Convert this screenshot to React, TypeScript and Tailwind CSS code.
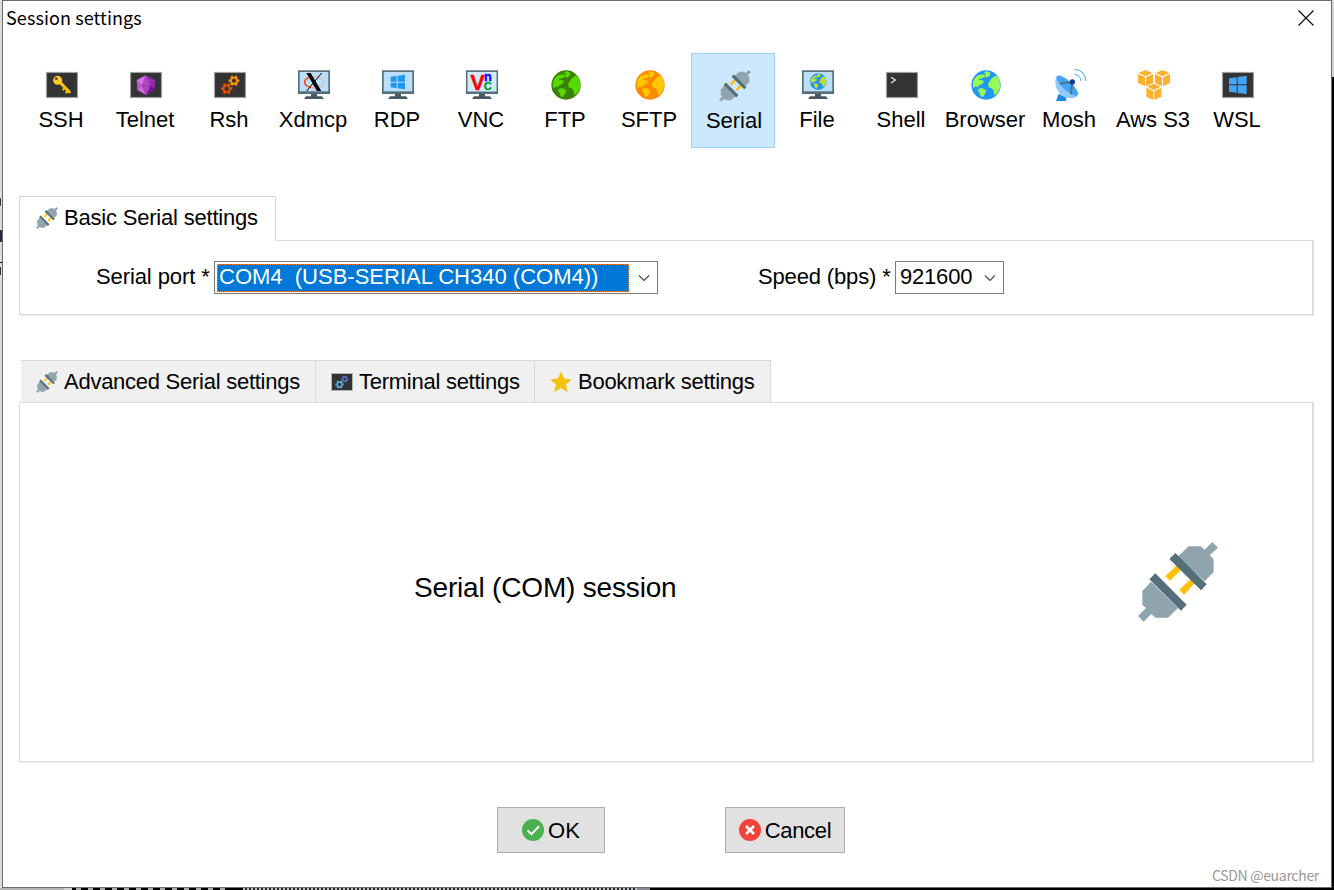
import type { ReactNode } from 'react';

function Plug({ className }: { className: string }) {
    return (
        <svg viewBox="84 66 240 240" className={className}>
            <path d="M203 110 L236 79 H272 L284 89 L307 66 L324 83 L299 106 L311 118 V156 L284 184 Z" fill="#90a4ae" />
            <path d="M123 185 L97 213 V255 L108 264 L84 288 L101 305 L124 282 L136 293 H174 L204 264 Z" fill="#90a4ae" />
            <path d="M200 136 L213 149 L180 182 L166 169 Z M241 178 L254 190 L222 224 L208 210 Z" fill="#ffc107" />
            <path d="M196 99 L290 193 L273 211 L178 117 Z M136 160 L230 254 L213 272 L118 178 Z" fill="#546e7a" />
        </svg>
    );
}

function Icon({ children }: { children: ReactNode }) {
    return (
        <svg viewBox="0 0 96 96" className="w-8 h-8 shrink-0 overflow-visible">
            {children}
        </svg>
    );
}

function Screen({ children }: { children?: ReactNode }) {
    return (
        <Icon>
            <rect x="1.5" y="10.5" width="93" height="75" fill="#333" stroke="#9e9e9e" strokeWidth="3.5" />
            {children}
        </Icon>
    );
}

function Monitor({ children }: { children?: ReactNode }) {
    return (
        <Icon>
            <path d="M39 72 H57 V82 H72 L78 90 H18 L24 82 H39 Z" fill="#455a64" />
            <rect x="0" y="4" width="96" height="71" fill="#546e7a" />
            <rect x="5" y="9" width="86" height="58" fill="#bbdefb" />
            {children}
        </Icon>
    );
}

function Globe({ sea, land }: { sea: string; land: string }) {
    return (
        <>
            <circle cx="48" cy="48" r="44" fill={sea} />
            <g fill={land}>
                <path d="M11 34 Q17 21 28 17 L41 16 L46 21 L44 25 L37 26 L35 30 L28 28 L27 34 L36 33 L42 38 L38 44 L30 47 L24 53 L16 53 L9 58 Q7 44 11 34 Z" />
                <path d="M42 9 L52 7 L61 12 L59 20 L50 26 L46 22 L46 14 Z" />
                <path d="M66 27 L77 20 L82 22 Q91 34 91 48 Q90 64 79 76 L73 78 L70 64 L65 58 L56 55 L54 46 L60 35 Z" />
                <path d="M26 59 L36 57 L49 64 L46 73 L39 84 L32 82 L29 72 L24 65 Z" />
            </g>
        </>
    );
}

function Gear({ x, y, r, color }: { x: number; y: number; r: number; color: string }) {
    return (
        <g transform={`translate(${x} ${y})`} stroke={color} fill="none">
            <circle r={r * 0.57} strokeWidth={r * 0.36} />
            {[30, 90, 150, 210, 270, 330].map((angle) => (
                <path key={angle} d={`M0 ${-r * 0.65} V${-r}`} strokeWidth={r * 0.45} transform={`rotate(${angle})`} />
            ))}
        </g>
    );
}

function Cube({ x, y }: { x: number; y: number }) {
    return (
        <g transform={`translate(${x} ${y})`} fill="#ffb031">
            <path d="M22.5 0 L43 9 L22.5 19 L2 9 Z" />
            <path d="M0 12 L21 22 V49 L0 39 Z" />
            <path d="M45 12 L24 22 V49 L45 39 Z" />
        </g>
    );
}

const windowsLogo = 'M26 23 L44 21 V38 H26 Z M47 20 L69 17 V38 H47 Z M26 41 H44 V58 L26 55 Z M47 41 H69 V61 L47 58 Z';

const sessions: { name: string; icon: ReactNode }[] = [
    {
        name: 'SSH',
        icon: (
            <Screen>
                <path d="M40 38 L70 69" stroke="#ffc107" strokeWidth="9" />
                <path d="M55 58 L50 63 M64 66 L59 72 M66 70 H74" stroke="#ffc107" strokeWidth="6" />
                <circle cx="35" cy="34" r="13.5" fill="#ffc928" />
                <circle cx="31" cy="29" r="4" fill="#5d4037" />
            </Screen>
        ),
    },
    {
        name: 'Telnet',
        icon: (
            <Screen>
                <path d="M47 19 L76 34 L73 61 L49 78 L22 63 L20 34 Z" fill="#9c27b0" />
                <path d="M47 19 L35 50 L20 34 Z" fill="#ce7bdc" />
                <path d="M47 19 L62 48 L35 50 Z" fill="#ab47bc" />
                <path d="M20 34 L35 50 L22 63 Z" fill="#ba58cb" />
                <path d="M35 50 L49 78 L22 63 Z" fill="#c86dd7" />
                <path d="M35 50 H62 L49 78 Z" fill="#ac43bd" />
                <path d="M62 48 L73 61 L49 78 Z" fill="#7313a2" />
            </Screen>
        ),
    },
    {
        name: 'Rsh',
        icon: (
            <Screen>
                <Gear x={60} y={35} r={16} color="#ff9800" />
                <Gear x={38} y={59} r={17} color="#e65100" />
            </Screen>
        ),
    },
    {
        name: 'Xdmcp',
        icon: (
            <Monitor>
                <ellipse cx="49" cy="40" rx="28" ry="17" fill="none" stroke="#f3b27a" strokeWidth="3" />
                <path d="M37 24 C14 30 14 50 39 56" fill="none" stroke="#f4511e" strokeWidth="5" />
                <path d="M71 12 L26 66" stroke="#000" strokeWidth="3" />
                <path d="M25 12 H38 L70 66 H57 Z" fill="#000" />
            </Monitor>
        ),
    },
    {
        name: 'RDP',
        icon: (
            <Monitor>
                <path d={windowsLogo} fill="#2196f3" />
            </Monitor>
        ),
    },
    {
        name: 'VNC',
        icon: (
            <Monitor>
                <rect x="5" y="9" width="86" height="58" fill="#d5e9fa" />
                <text fontFamily="Liberation Sans, sans-serif" fontWeight="700">
                    <tspan x="13" y="63" fontSize="66" fill="#f00" stroke="#f00" strokeWidth="1">V</tspan>
                    <tspan x="54" y="35" fontSize="38" fill="#00f" stroke="#00f" strokeWidth="1">n</tspan>
                    <tspan x="53" y="63" fontSize="34" fill="#00a31c" stroke="#00a31c" strokeWidth="1">C</tspan>
                </text>
            </Monitor>
        ),
    },
    { name: 'FTP', icon: <Icon><Globe sea="#388206" land="#57d900" /></Icon> },
    { name: 'SFTP', icon: <Icon><Globe sea="#ff8a00" land="#ffc800" /></Icon> },
    { name: 'Serial', icon: <Plug className="w-8 h-8 shrink-0" /> },
    {
        name: 'File',
        icon: (
            <Monitor>
                <g transform="translate(21.5 10.5) scale(0.57)">
                    <Globe sea="#2196f3" land="#c0dc39" />
                </g>
            </Monitor>
        ),
    },
    {
        name: 'Shell',
        icon: (
            <Screen>
                <path d="M15 25 L28 33 L15 42" fill="none" stroke="#eee" strokeWidth="3.5" />
            </Screen>
        ),
    },
    { name: 'Browser', icon: <Icon><Globe sea="#2196f3" land="#96fb55" /></Icon> },
    {
        name: 'Mosh',
        icon: (
            <Icon>
                <path d="M14 74 L37 86 V96 H6 Z" fill="#1e88e5" />
                <path d="M9 21 C-4 42 8 73 33 84 C48 90 62 89 71 80 Z" fill="#90caf9" />
                <ellipse cx="40" cy="50" rx="42" ry="14" transform="rotate(43 40 50)" fill="#42a5f5" />
                <path d="M17 44 L55 39 L51 76" fill="none" stroke="#546e7a" strokeWidth="5" />
                <circle cx="55" cy="39" r="8" fill="#0d3c99" />
                <path d="M62 1 Q92 3 96 36 M62 16 Q79 18 81 36" fill="none" stroke="#42a5f5" strokeWidth="3" />
            </Icon>
        ),
    },
    {
        name: 'Aws S3',
        icon: (
            <Icon>
                <Cube x={0} y={3} />
                <Cube x={51} y={3} />
                <Cube x={25} y={44} />
            </Icon>
        ),
    },
    {
        name: 'WSL',
        icon: (
            <Screen>
                <path d="M21 28 L44 25 V46 H21 Z M47 24 L74 20 V46 H47 Z M21 49 H44 V71 L21 68 Z M47 49 H74 V75 L47 72 Z" fill="#42a5f5" />
            </Screen>
        ),
    },
];

function Chevron() {
    return (
        <svg viewBox="0 0 12 8" className="w-3 h-2">
            <path d="M1 1.5 L6 6.5 L11 1.5" fill="none" stroke="#444" strokeWidth="1.1" />
        </svg>
    );
}

export default function App() {
    return (
        <div className="w-[1334px] h-[890px] overflow-hidden bg-white font-['Liberation_Sans',Arial,sans-serif] text-[22px] leading-6 text-black">
            <div className="flex h-[888px]">
                {/* Window behind, left edge */}
                <div className="w-0.5 shrink-0 bg-[#dcdcdc] pt-[198px]">
                    <div className="h-2 w-px rounded-r-full bg-[#333]"></div>
                    <div className="mt-6 h-3 bg-[#26264a]"></div>
                    <div className="mt-5 h-px bg-black"></div>
                    <div className="mt-1 h-2 w-px bg-[#333]"></div>
                </div>

                <main className="w-[1330px] shrink-0 border border-[#6b6b6b] bg-white flex flex-col">
                    {/* Title bar */}
                    <header className="flex h-[34px] shrink-0 items-center justify-between pl-[3px] pr-[17px]">
                        <h1 className="font-['Noto_Sans_CJK_SC',sans-serif] text-[18px] leading-8 tracking-[0.1px] pb-0.5">Session settings</h1>
                        <svg viewBox="0 0 16 16" className="h-4 w-4">
                            <path d="M0.5 0.5 L15.5 15.5 M15.5 0.5 L0.5 15.5" stroke="#000" strokeWidth="1.1" />
                        </svg>
                    </header>

                    {/* Session types */}
                    <nav className="mt-[18px] flex h-[95px] shrink-0 pl-4">
                        {sessions.map((session) => (
                            <button
                                key={session.name}
                                className={`flex w-[84px] shrink-0 flex-col items-center whitespace-nowrap pt-4 ${session.name === 'Serial' ? 'border border-[#99d1ff] bg-[#cce8ff] pl-0.5' : ''}`}
                            >
                                <div className="pl-0.5">{session.icon}</div>
                                <span className="mt-[7px] leading-6">{session.name}</span>
                            </button>
                        ))}
                    </nav>

                    {/* Basic settings */}
                    <section className="mt-12 px-4">
                        <div className="relative z-10 -mb-px flex h-[45px] w-[257px] items-center gap-1.5 border border-b-0 border-[#d9d9d9] bg-white pl-4 pb-0.5 whitespace-nowrap tracking-[-0.2px]">
                            <Plug className="h-[22px] w-[22px]" />
                            <span>Basic Serial settings</span>
                        </div>
                        <div className="flex h-[75px] w-[1295px] border border-r-2 border-[#dcdcdc] pl-[76px] pt-5 shadow-[0_1px_0_#f0f0f0]">
                            <label className="w-[118px] shrink-0 whitespace-nowrap pt-1 tracking-[-0.1px]">Serial port *</label>
                            <div className="flex h-[33px] w-[444px] shrink-0 items-center border border-[#7a7a7a] p-0.5">
                                <div className="h-7 w-[412px] whitespace-pre border border-dotted border-[#ff8728] bg-[#0078d7] pl-px leading-[23px] text-white">COM4  (USB-SERIAL CH340 (COM4))</div>
                                <div className="ml-[9px]"><Chevron /></div>
                            </div>
                            <label className="ml-[100px] w-[137px] shrink-0 whitespace-nowrap pt-1 tracking-[-0.15px]">Speed (bps) *</label>
                            <div className="flex h-[33px] w-[109px] shrink-0 items-center justify-between border border-[#7a7a7a] pl-1 pr-[7px]">
                                <span className="pb-0.5 tracking-[-0.2px]">921600</span>
                                <Chevron />
                            </div>
                        </div>
                    </section>

                    {/* Advanced settings */}
                    <section className="mt-[45px] px-4">
                        <div className="ml-0.5 flex h-[42px] w-[750px] border-t border-r border-[#d9d9d9] bg-[#f0f0f0] whitespace-nowrap tracking-[-0.26px]">
                            <div className="flex w-[295px] items-center gap-1.5 border-r border-[#d9d9d9] pl-[15px]">
                                <Plug className="h-[22px] w-[22px]" />
                                <span>Advanced Serial settings</span>
                            </div>
                            <div className="flex w-[219px] items-center gap-1.5 border-r border-[#d9d9d9] pl-[15px]">
                                <svg viewBox="0 0 22 22" className="h-[22px] w-[22px]">
                                    <rect x="0.5" y="2.5" width="21" height="17" fill="#333" stroke="#b5b5b5" />
                                    <Gear x={13.8} y={8.2} r={3.5} color="#6574d8" />
                                    <Gear x={8.5} y={13.5} r={4.2} color="#4fb8f5" />
                                </svg>
                                <span>Terminal settings</span>
                            </div>
                            <div className="flex items-center gap-1.5 pl-[15px]">
                                <svg viewBox="0 0 22 22" className="h-[22px] w-[22px]">
                                    <path d="M11 0.5 L14.1 7.6 L21.8 8.4 L16 13.5 L17.8 21 L11 17.2 L4.2 21 L6 13.5 L0.2 8.4 L7.9 7.6 Z" fill="#f4c20d" />
                                </svg>
                                <span>Bookmark settings</span>
                            </div>
                        </div>
                        <div className="flex h-[360px] w-[1295px] items-center justify-between border border-r-2 border-[#dcdcdc] pl-[394px] pr-[94px] shadow-[0_1px_0_#f0f0f0]">
                            <p className="whitespace-nowrap pt-3 text-[28px] leading-8 tracking-[-0.18px]">Serial (COM) session</p>
                            <Plug className="h-20 w-20" />
                        </div>
                    </section>

                    <footer className="mt-[45px] flex h-[46px] shrink-0 pl-[494px]">
                        <button className="flex w-[108px] items-center justify-center gap-1 border border-[#adadad] bg-[#e1e1e1]">
                            <svg viewBox="0 0 22 22" className="h-[22px] w-[22px]">
                                <circle cx="11" cy="11" r="11" fill="#4caf50" />
                                <path d="M5.5 11.5 L9.5 15.2 L17 7.2" fill="none" stroke="#fff" strokeWidth="2" />
                            </svg>
                            <span className="pt-0.5">OK</span>
                        </button>
                        <button className="ml-[120px] flex w-[120px] items-center justify-center gap-1 border border-[#adadad] bg-[#e1e1e1]">
                            <svg viewBox="0 0 22 22" className="h-[22px] w-[22px]">
                                <circle cx="11" cy="11" r="11" fill="#f44336" />
                                <path d="M7 7 L15 15 M15 7 L7 15" stroke="#fff" strokeWidth="2.6" />
                            </svg>
                            <span className="pt-0.5 tracking-[-0.3px]">Cancel</span>
                        </button>
                    </footer>
                    <p className="mt-3 mr-3 self-end font-['Noto_Sans_CJK_SC',sans-serif] text-[14px] leading-5 tracking-[-0.3px] text-[#999]">CSDN @euarcher</p>
                </main>

                {/* Window behind, right edge */}
                <div className="w-0.5 shrink-0 bg-black">
                    <div className="h-[77px] bg-[#d4d4d4]"></div>
                </div>
            </div>

            {/* Strip of the terminal showing below the dialog */}
            <div className="flex h-0.5 bg-black">
                <div className="w-16 bg-[#b5b5b5]"></div>
                <div className="w-2 bg-[#d0d0d0]"></div>
                <div className="ml-1 w-[150px] bg-[repeating-linear-gradient(90deg,#aaa_0_5px,#000_5px_12px)]"></div>
                <div className="ml-[17px] w-[394px] bg-[repeating-linear-gradient(90deg,#b5c0c8_0_2px,#302820_2px_4px)]"></div>
                <div className="w-[13px] bg-[#8b8794]"></div>
            </div>
        </div>
    );
}
